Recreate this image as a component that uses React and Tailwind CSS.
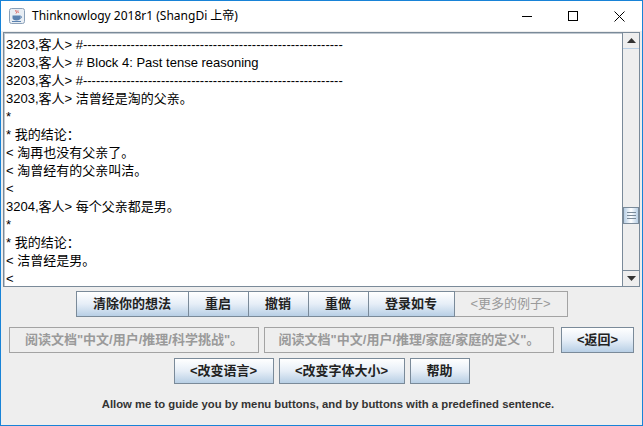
import React from 'react';

const dashes = '-'.repeat(60);

const lines = [
  `3203,客人> #${dashes}`,
  '3203,客人> # Block 4: Past tense reasoning',
  `3203,客人> #${dashes}`,
  '3203,客人> 洁曾经是淘的父亲。',
  '*',
  '* 我的结论：',
  '< 淘再也没有父亲了。',
  '< 淘曾经有的父亲叫洁。',
  '<',
  '3204,客人> 每个父亲都是男。',
  '*',
  '* 我的结论：',
  '< 洁曾经是男。',
  '<',
];

const font = { fontFamily: '"Liberation Sans", "Noto Sans CJK SC", sans-serif' };

const JavaIcon = () => (
  <svg width="16" height="16" viewBox="0 0 16 16">
    <rect x="0.5" y="0.5" width="15" height="15" rx="2" fill="#e8eef4" stroke="#8aa0b8" />
    <path d="M7 2c-1 1.5 1.5 2 0 3.5M9 2.5c-.8 1 .8 1.5 0 2.5" stroke="#d9534f" strokeWidth="1" fill="none" />
    <path d="M3.5 7.5h8v2.5c0 1.5-1.5 2.5-4 2.5s-4-1-4-2.5z" fill="#5b82b0" />
    <path d="M11.5 8.2c1.5 0 1.5 2-0.3 2" stroke="#5b82b0" strokeWidth="1" fill="none" />
    <path d="M3 13.5h9" stroke="#5b82b0" strokeWidth="1" />
  </svg>
);

const Btn = ({ children, className = '' }) => (
  <div
    className={`h-full flex items-center justify-center border border-[#7a8a99] bg-gradient-to-b from-white via-[#e6eef7] to-[#b8cfe5] text-[13px] font-bold text-[#222] ${className}`}
  >
    {children}
  </div>
);

const DisabledBtn = ({ children, className = '' }) => (
  <div
    className={`h-full flex items-center justify-center border border-[#a3a3a3] bg-[#eeeeee] text-[13px] font-bold text-[#9a9a9a] ${className}`}
  >
    {children}
  </div>
);

export default function App() {
  return (
    <div className="w-[643px] h-[426px] flex flex-col border border-[#1883d7] bg-white" style={font}>
      {/* title bar */}
      <div className="h-[30px] flex items-center bg-white">
        <div className="ml-[8px] mt-[-1px]">
          <JavaIcon />
        </div>
        <span className="ml-[7px] text-[12px] text-black" style={{ fontFamily: '"Noto Sans", "Noto Sans CJK SC", sans-serif' }}>
          Thinknowlogy 2018r1 (ShangDi 上帝)
        </span>
        <div className="ml-auto flex items-center h-full">
          <div className="w-[46px] h-full flex items-center justify-center">
            <div className="w-[10px] h-px bg-black" />
          </div>
          <div className="w-[46px] h-full flex items-center justify-center">
            <div className="w-[10px] h-[10px] border border-black" />
          </div>
          <div className="w-[46px] h-full flex items-center justify-center">
            <svg width="11" height="11" viewBox="0 0 11 11">
              <path d="M0.5 0.5L10.5 10.5M10.5 0.5L0.5 10.5" stroke="#000" strokeWidth="1" />
            </svg>
          </div>
        </div>
      </div>

      {/* content */}
      <div className="flex-1 flex flex-col bg-[#eeeeee] px-[2px] pt-[1px]">
        <div className="h-[255px] flex border border-[#7a8a99] bg-white">
          <div className="flex-1 overflow-hidden pt-[2px] pl-[1px] border-l border-t border-[#c0c8d0]">
            {lines.map((l, i) => (
              <div key={i} className="h-[18px] leading-[18px] text-[13px] text-black whitespace-pre">
                {l}
              </div>
            ))}
          </div>
          <div className="w-[17px] flex flex-col bg-[#eeeeee] border-l border-[#7a8a99]">
            <div className="h-[16px] flex items-center justify-center border-b border-[#b8cfe5] bg-[#eeeeee]">
              <svg width="9" height="5" viewBox="0 0 9 5">
                <path d="M4.5 0L9 5H0z" fill="#333" />
              </svg>
            </div>
            <div className="flex-1 flex flex-col">
              <div className="h-[158px]" />
              <div className="h-[17px] flex flex-col items-center justify-center gap-[2px] border border-[#7a8a99] bg-gradient-to-r from-[#b8cfe5] via-white to-[#b8cfe5]">
                <div className="w-[9px] h-px bg-[#7a8a99]" />
                <div className="w-[9px] h-px bg-[#7a8a99]" />
                <div className="w-[9px] h-px bg-[#7a8a99]" />
              </div>
              <div className="flex-1" />
            </div>
            <div className="h-[16px] flex items-center justify-center border-t border-[#7a8a99] bg-[#eeeeee]">
              <svg width="9" height="5" viewBox="0 0 9 5">
                <path d="M0 0H9L4.5 5z" fill="#333" />
              </svg>
            </div>
          </div>
        </div>

        {/* row 1 */}
        <div className="mt-[4px] h-[26px] flex justify-center">
          <Btn className="w-[113px]">清除你的想法</Btn>
          <Btn className="w-[60px] border-l-0">重启</Btn>
          <Btn className="w-[60px] border-l-0">撤销</Btn>
          <Btn className="w-[60px] border-l-0">重做</Btn>
          <Btn className="w-[86px] border-l-0">登录如专</Btn>
          <DisabledBtn className="w-[113px] border-l-0 font-normal">&lt;更多的例子&gt;</DisabledBtn>
        </div>

        {/* row 2 */}
        <div className="mt-[10px] h-[26px] flex justify-center">
          <DisabledBtn className="w-[250px]">阅读文档"中文/用户/推理/科学挑战"。</DisabledBtn>
          <DisabledBtn className="w-[290px] ml-[5px]">阅读文档"中文/用户/推理/家庭/家庭的定义"。</DisabledBtn>
          <Btn className="w-[73px] ml-[7px]">&lt;返回&gt;</Btn>
        </div>

        {/* row 3 */}
        <div className="mt-[5px] h-[26px] flex justify-center gap-[5px]">
          <Btn className="w-[100px]">&lt;改变语言&gt;</Btn>
          <Btn className="w-[126px]">&lt;改变字体大小&gt;</Btn>
          <Btn className="w-[60px]">帮助</Btn>
        </div>

        <div className="flex-1 flex items-center justify-center pl-[13px] text-[11.3px] font-bold text-[#333] pb-[1px]">
          Allow me to guide you by menu buttons, and by buttons with a predefined sentence.
        </div>
      </div>
    </div>
  );
}
